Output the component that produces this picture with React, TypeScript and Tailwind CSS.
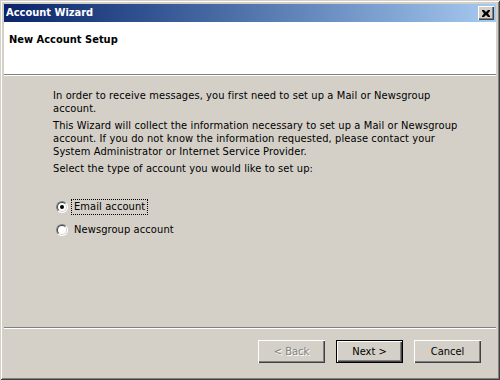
import { useState } from 'react';

const font = { fontFamily: '"DejaVu Sans Condensed", "Liberation Sans", Arial, sans-serif' };

function WinButton({ label, disabled, isDefault }: { label: string; disabled?: boolean; isDefault?: boolean }) {
  return (
    <button
      type="button"
      disabled={disabled}
      className={`w-[67px] h-[23px] bg-[#d4d0c8] text-[11px] leading-none ${
        isDefault
          ? 'border border-black shadow-[inset_1px_1px_#ffffff,inset_-1px_-1px_#404040,inset_-2px_-2px_#808080]'
          : 'shadow-[inset_1px_1px_#ffffff,inset_-1px_-1px_#404040,inset_-2px_-2px_#808080]'
      } ${disabled ? 'text-[#808080] [text-shadow:1px_1px_#ffffff]' : 'text-black'}`}
    >
      {label}
    </button>
  );
}

function Radio({ checked, label, focused, onClick }: { checked: boolean; label: string; focused?: boolean; onClick: () => void }) {
  return (
    <div className="flex items-center h-[16px] cursor-default" onClick={onClick}>
      <span className="w-[12px] h-[12px] rounded-full bg-white relative shrink-0 border border-t-[#808080] border-l-[#808080] border-b-white border-r-white">
        <span className="absolute inset-0 rounded-full border border-t-[#404040] border-l-[#404040] border-b-[#d4d0c8] border-r-[#d4d0c8]" />
        {checked && <span className="absolute left-[3px] top-[3px] w-[4px] h-[4px] rounded-full bg-black" />}
      </span>
      <span className={`ml-[4px] px-[2px] leading-[14px] ${focused ? 'outline outline-1 outline-dotted outline-black' : ''}`}>{label}</span>
    </div>
  );
}

export default function App() {
  const [tipo, setTipo] = useState<'email' | 'news'>('email');

  return (
    <div
      className="w-[500px] h-[380px] bg-[#d4d0c8] flex flex-col p-[4px] text-[11px] text-black shadow-[inset_1px_1px_#d4d0c8,inset_-1px_-1px_#404040,inset_2px_2px_#ffffff,inset_-2px_-2px_#808080]"
      style={font}
    >
      {/* barra de título */}
      <div className="h-[18px] flex items-center justify-between pl-[2px] pr-[2px] bg-gradient-to-r from-[#0a246a] to-[#a6caf0]">
        <span className="text-white font-bold text-[11px]">Account Wizard</span>
        <button
          type="button"
          className="w-[16px] h-[14px] bg-[#d4d0c8] flex items-center justify-center shadow-[inset_1px_1px_#ffffff,inset_-1px_-1px_#404040,inset_-2px_-2px_#808080]"
        >
          <svg width="8" height="7" viewBox="0 0 8 7">
            <path d="M0 0h2l2 2 2-2h2v1L6 3.5 8 6v1H6L4 5 2 7H0V6l2-2.5L0 1z" fill="black" />
          </svg>
        </button>
      </div>

      {/* cabecera blanca */}
      <div className="h-[52px] bg-white pl-[5px] pt-[10px]">
        <span className="font-bold text-[11px]">New Account Setup</span>
      </div>
      <div className="h-[1px] bg-[#808080]" />
      <div className="h-[1px] bg-white" />

      {/* contenido */}
      <div className="flex-1 pl-[49px] pt-[13px] leading-[13px] tracking-[0.1px]">
        <p>
          In order to receive messages, you first need to set up a Mail or Newsgroup
          <br />
          account.
        </p>
        <p className="mt-[4px]">
          This Wizard will collect the information necessary to set up a Mail or Newsgroup
          <br />
          account. If you do not know the information requested, please contact your
          <br />
          System Administrator or Internet Service Provider.
        </p>
        <p className="mt-[4px]">Select the type of account you would like to set up:</p>

        <div className="mt-[24px] pl-[3px] flex flex-col gap-[7px]">
          <Radio checked={tipo === 'email'} focused={tipo === 'email'} label="Email account" onClick={() => setTipo('email')} />
          <Radio checked={tipo === 'news'} focused={tipo === 'news'} label="Newsgroup account" onClick={() => setTipo('news')} />
        </div>
      </div>

      <div className="h-[1px] bg-[#808080]" />
      <div className="h-[1px] bg-white" />

      {/* botones */}
      <div className="h-[47px] flex justify-end items-start pt-[11px] pr-[15px] gap-[11px]">
        <WinButton label="< Back" disabled />
        <WinButton label="Next >" isDefault />
        <WinButton label="Cancel" />
      </div>
    </div>
  );
}
